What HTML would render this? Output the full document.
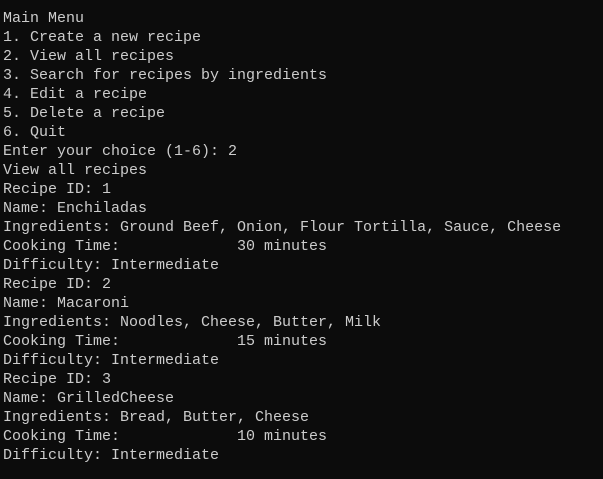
<!DOCTYPE html>
<html><head><style>
html,body{margin:0;padding:0;background:#0c0c0c;width:603px;height:479px;overflow:hidden}
pre{margin:0;padding:9px 0 0 3px;font-family:"Liberation Mono",monospace;font-size:15px;line-height:19px;color:#cccccc}
</style></head><body><pre>Main Menu
1. Create a new recipe
2. View all recipes
3. Search for recipes by ingredients
4. Edit a recipe
5. Delete a recipe
6. Quit
Enter your choice (1-6): 2
View all recipes
Recipe ID: 1
Name: Enchiladas
Ingredients: Ground Beef, Onion, Flour Tortilla, Sauce, Cheese
Cooking Time:             30 minutes
Difficulty: Intermediate
Recipe ID: 2
Name: Macaroni
Ingredients: Noodles, Cheese, Butter, Milk
Cooking Time:             15 minutes
Difficulty: Intermediate
Recipe ID: 3
Name: GrilledCheese
Ingredients: Bread, Butter, Cheese
Cooking Time:             10 minutes
Difficulty: Intermediate</pre></body></html>
